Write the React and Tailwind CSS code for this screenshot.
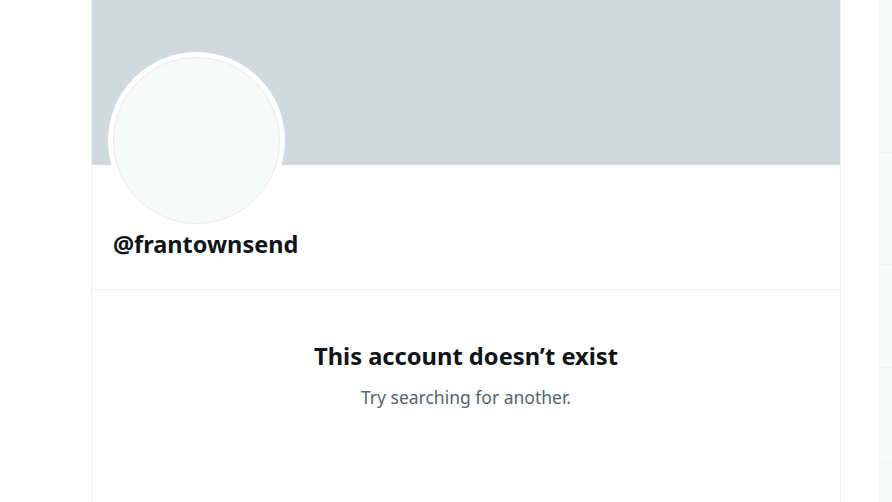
export default function App() {
  const font = { fontFamily: '"Segoe UI", "Noto Sans", "Open Sans", sans-serif' };
  return (
    <div className="w-[892px] h-[502px] overflow-hidden bg-white flex" style={font}>
      <div className="ml-[91px] w-[750px] shrink-0 border-x border-[#eff3f4] min-h-[502px]">
        <div className="h-[165px] bg-[#cfd9de]" />
        <div className="px-4 pb-[30px] border-b border-[#eff3f4]">
          <div className="-mt-[113px] w-[177px] h-[177px] rounded-full bg-white p-[5px] relative">
            <div className="w-full h-full rounded-full bg-[#f7f9f9] border border-[#e7eaeb]" />
          </div>
          <div className="mt-0 pl-[5px] text-[23.5px] leading-[30px] font-bold text-[#0f1419]">@frantownsend</div>
        </div>
        <div className="flex flex-col items-center pt-[50px]">
          <div className="text-[23.7px] leading-[32px] font-bold text-[#0f1419]">This account doesn’t exist</div>
          <div className="mt-[14px] text-[17.5px] leading-[22px] text-[#536471]">Try searching for another.</div>
        </div>
      </div>
      <div className="ml-[38px] w-[350px] shrink-0 bg-[#f7f9f9] flex flex-col">
        <div className="h-[153px] border-b border-[#eff3f4]" />
        <div className="h-[112px] border-b border-[#eff3f4]" />
        <div className="h-[103px] border-b border-[#eff3f4]" />
        <div className="h-[95px] border-b border-[#eff3f4]" />
      </div>
    </div>
  );
}
